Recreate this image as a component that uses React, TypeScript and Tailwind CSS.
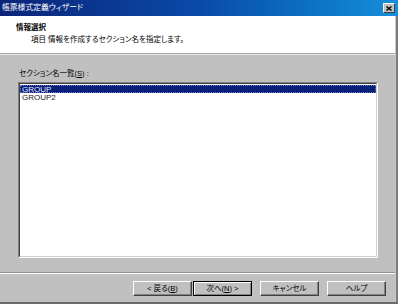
import React from "react";

const jp = "[font-family:'Liberation_Sans','Noto_Sans_CJK_JP',sans-serif] [font-feature-settings:'palt']";

function Btn({ children, isDefault }: { children: React.ReactNode; isDefault?: boolean }) {
  return (
    <div
      className={
        "w-[59px] h-[15px] flex items-center justify-center text-[7.5px] leading-none text-black bg-[#c0c0c0] " +
        (isDefault
          ? "border border-black shadow-[inset_1px_1px_0_#ffffff,inset_-1px_-1px_0_#808080]"
          : "border-t border-l border-t-white border-l-white border-r border-b border-r-[#404040] border-b-[#404040] shadow-[inset_-1px_-1px_0_#808080]")
      }
    >
      {children}
    </div>
  );
}

export default function App() {
  return (
    <div className={"w-[398px] h-[304px] flex flex-col bg-[#c0c0c0] overflow-hidden " + jp}>
      <div className="h-[16px] flex items-center justify-between pl-[2px] pr-[3px] bg-gradient-to-r from-[#0a2478] via-[#0a4aa8] to-[#168fd9]">
        <span className="text-white text-[7.8px] leading-none">帳票様式定義ウィザード</span>
        <div className="w-[12px] h-[10px] bg-[#c0c0c0] flex items-center justify-center border-t border-l border-white border-r border-b border-r-[#404040] border-b-[#404040]">
          <svg width="6" height="5" viewBox="0 0 6 5">
            <path d="M0.5 0.5 L5.5 4.5 M5.5 0.5 L0.5 4.5" stroke="#000" strokeWidth="1.4" />
          </svg>
        </div>
      </div>
      <div className="flex-1 flex">
        <div className="flex-1 flex flex-col">
          <div className="h-[37px] bg-white flex flex-col pl-[16px] pt-[7px]">
            <div className="text-[7.5px] leading-[9px] font-bold text-black">情報選択</div>
            <div className="text-[7.5px] leading-[9px] text-black pl-[15px] mt-[3px]">項目 情報を作成するセクション名を指定します。</div>
          </div>
          <div className="h-px bg-[#a8a8a8]" />
          <div className="h-px bg-[#e6e6e6]" />
          <div className="flex flex-col pl-[18px] pr-[17px] pt-[14px]">
            <div className="text-[7.5px] leading-[10px] text-black pl-px">
              セクション名一覧(<span className="underline">S</span>) :
            </div>
            <div className="mt-[3px] h-[176px] border-t border-l border-t-[#808080] border-l-[#808080] border-r border-b border-r-white border-b-white">
              <div className="h-full bg-white border-t border-l border-t-[#404040] border-l-[#404040] border-r border-b border-r-[#d4d0c8] border-b-[#d4d0c8] flex flex-col pt-px">
                <div className="h-[8px] bg-[#0a1f7a] text-[#e8e8ff] text-[8px] leading-[8px] pl-px border border-dotted border-[#6a78c0] [font-family:'Liberation_Sans',sans-serif]">
                  GROUP
                </div>
                <div className="h-[9px] text-[#202020] text-[8px] leading-[9px] pl-[2px] [font-family:'Liberation_Sans',sans-serif]">
                  GROUP2
                </div>
              </div>
            </div>
          </div>
          <div className="mt-[14px] h-px bg-[#909090]" />
          <div className="h-px bg-white" />
          <div className="mt-[7px] flex pl-[133px]">
            <Btn>
              &lt; 戻る(<span className="underline">B</span>)
            </Btn>
            <div className="ml-px">
              <Btn isDefault>
                次へ(<span className="underline">N</span>) &gt;
              </Btn>
            </div>
            <div className="ml-[8px]">
              <Btn>キャンセル</Btn>
            </div>
            <div className="ml-[8px]">
              <Btn>ヘルプ</Btn>
            </div>
          </div>
        </div>
        <div className="w-px bg-[#c8c8c8]" />
        <div className="w-[2px] bg-[#7c7c7c]" />
      </div>
      <div className="h-[2px] bg-[#6a6a6a]" />
    </div>
  );
}
